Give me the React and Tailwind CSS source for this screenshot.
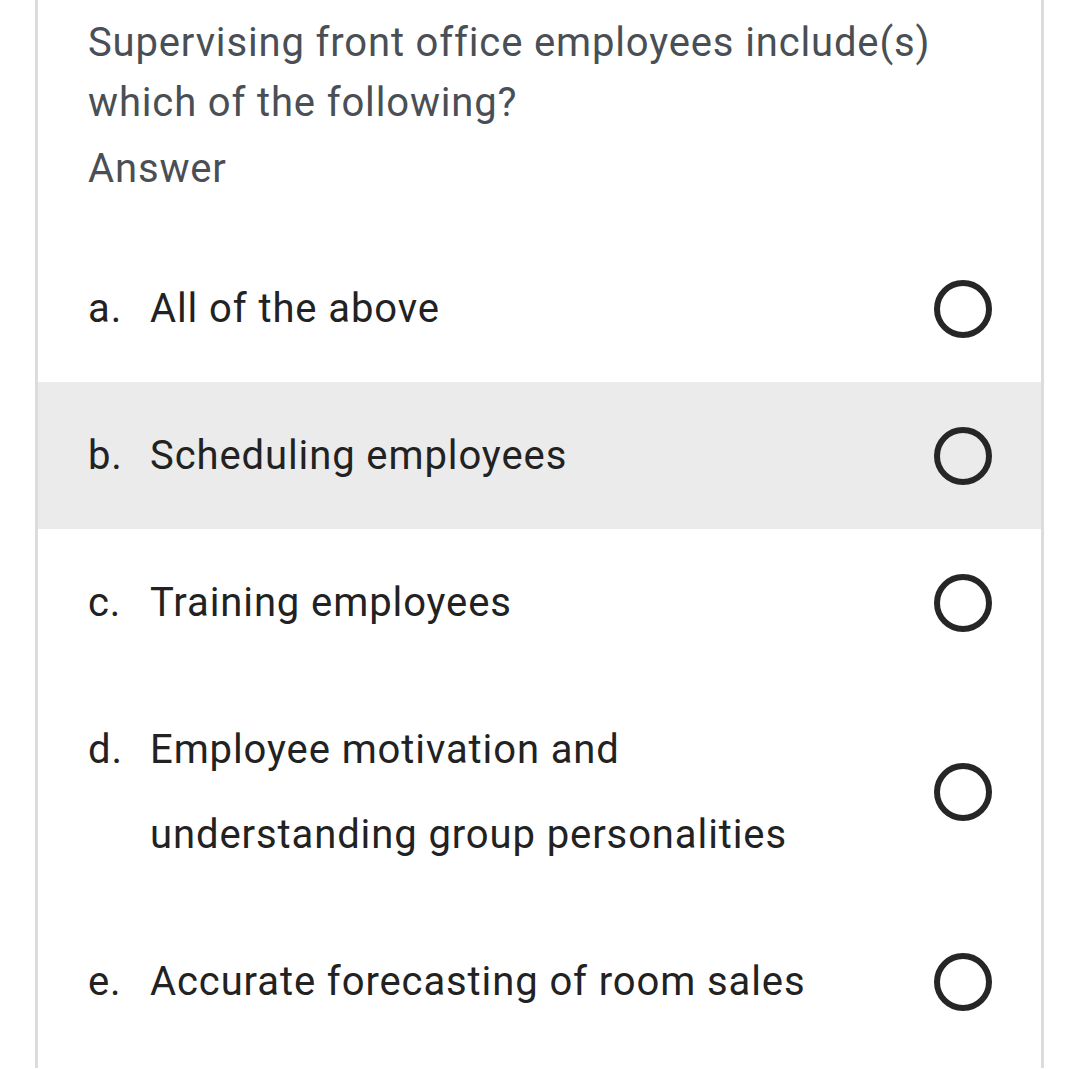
const options = [
  { letter: "a.", text: "All of the above" },
  { letter: "b.", text: "Scheduling employees", active: true },
  { letter: "c.", text: "Training employees" },
  { letter: "d.", text: "Employee motivation and understanding group personalities", wrap: true },
  { letter: "e.", text: "Accurate forecasting of room sales" },
];

function Radio() {
  return <div className="w-[58px] h-[58px] shrink-0 rounded-full border-[6px] border-[#262626]" />;
}

export default function App() {
  return (
    <div className="bg-white h-[1070px] w-[1080px] overflow-hidden" style={{ fontFamily: "Roboto, 'Liberation Sans', sans-serif" }}>
      <div className="ml-[35px] w-[1009px] h-[1068px] border-l-[3px] border-r-[3px] border-[#dadce0]">
        <div className="pl-[50px] pr-[60px] pt-[13px] text-[40px] leading-[60px] tracking-[0.85px] text-[#4a4f55]">
          <p>Supervising front office employees include(s) which of the following?</p>
          <p className="mt-[6px]">Answer</p>
        </div>
        <div className="mt-[36px]">
          {options.map((o) => (
            <div
              key={o.letter}
              className={`flex items-center justify-between pl-[50px] pr-[49px] py-[31px] ${o.active ? "bg-[#ebebeb]" : ""}`}
            >
              <div className="flex text-[40px] leading-[85px] tracking-[0.9px] text-[#222222]">
                <span className="w-[62px] shrink-0">{o.letter}</span>
                <span className={o.wrap ? "w-[660px]" : ""}>{o.text}</span>
              </div>
              <Radio />
            </div>
          ))}
        </div>
      </div>
    </div>
  );
}
